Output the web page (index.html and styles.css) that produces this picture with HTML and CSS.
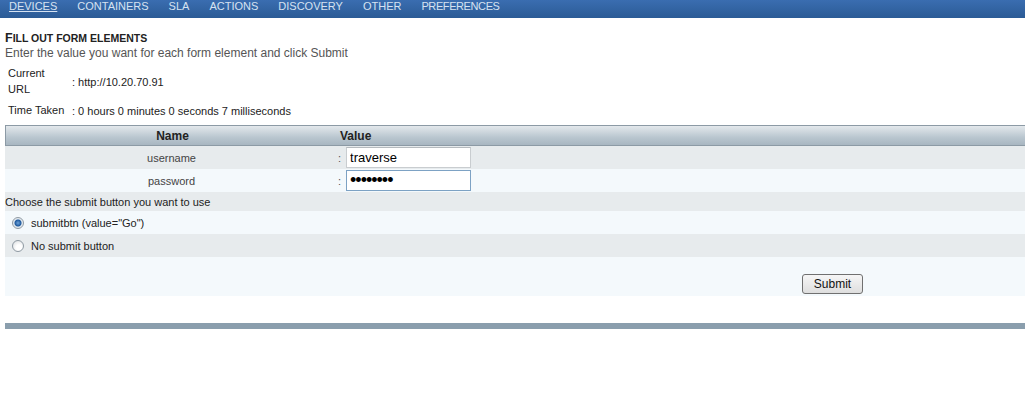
FILE: index.html
```html
<!DOCTYPE html>
<html lang="en">
<head>
    <meta charset="UTF-8">
    <title>Fill out form elements</title>
    <link rel="stylesheet" href="styles.css">
</head>
<body>
    <nav class="topnav">
        <a href="#" class="active">DEVICES</a>
        <a href="#">CONTAINERS</a>
        <a href="#">SLA</a>
        <a href="#">ACTIONS</a>
        <a href="#">DISCOVERY</a>
        <a href="#">OTHER</a>
        <a href="#">PREFERENCES</a>
    </nav>

    <section class="page">
        <h1>Fill out form elements</h1>
        <p class="subtitle">Enter the value you want for each form element and click Submit</p>

        <div class="info">
            <div class="info-label">Current URL</div>
            <div class="info-value">: http://10.20.70.91</div>
            <div class="info-label">Time Taken</div>
            <div class="info-value">: 0 hours 0 minutes 0 seconds 7 milliseconds</div>
        </div>

        <form class="form-table">
            <div class="head row">
                <div class="col-name">Name</div>
                <div class="col-value">Value</div>
            </div>
            <div class="row odd">
                <div class="col-name">username</div>
                <div class="col-value">: <input type="text" value="traverse"></div>
            </div>
            <div class="row even">
                <div class="col-name">password</div>
                <div class="col-value">: <input type="password" value="traverse" class="focused" autofocus></div>
            </div>
            <div class="row odd choose">Choose the submit button you want to use</div>
            <label class="row even radio-row">
                <input type="radio" name="submitbtn" checked> submitbtn (value="Go")
            </label>
            <label class="row odd radio-row">
                <input type="radio" name="submitbtn"> No submit button
            </label>
            <div class="row even submit-row">
                <button type="submit">Submit</button>
            </div>
        </form>

        <div class="footer-bar"></div>
    </section>
</body>
</html>
```

FILE: styles.css
```css
/* General Styles */
body {
    margin: 0;
    font-family: "Liberation Sans", Arial, sans-serif;
    font-size: 11px;
    color: #333;
    background: #fff;
}

.topnav {
    display: flex;
    gap: 20px;
    align-items: flex-start;
    height: 18px;
    padding-left: 9px;
    background: linear-gradient(#3a6db0, #2b5b95);
}

.topnav a {
    color: #d6e2f1;
    text-decoration: none;
    font-size: 11px;
    line-height: 13px;
}

.topnav a:last-child {
    letter-spacing: -0.4px;
}

.topnav a.active {
    text-decoration: underline;
}

.page {
    padding-left: 5px;
}

/* small caps drawn by hand: big first letter, rest in smaller capitals */
h1 {
    margin: 12px 0 0;
    font-size: 10.5px;
    line-height: 16px;
    text-transform: uppercase;
    font-weight: bold;
    color: #222;
}

h1::first-letter {
    font-size: 12.5px;
}

.subtitle {
    margin: 0;
    font-size: 12px;
    line-height: 15px;
    color: #555;
}

/* Info block */
.info {
    display: grid;
    grid-template-columns: 60px auto;
    column-gap: 4px;
    padding-left: 3px;
    margin-top: 2px;
    color: #222;
    line-height: 16px;
}

.info-label,
.info-value {
    padding: 2px 0;
    display: flex;
    align-items: center;
}

.info-label {
    display: block;
    align-self: center;
}

.info-value {
    padding-top: 4px;
}

/* Form table */
.form-table {
    margin-top: 4px;
}

.row {
    display: flex;
    align-items: center;
}

.head {
    height: 19px;
    border: 1px solid #8c9aa5;
    border-right: none;
    background: linear-gradient(#e3e8ec, #b9c6cf 60%, #a8b6c1);
    font-size: 12px;
    font-weight: bold;
    color: #222;
}

.odd {
    background: #e7ebed;
}

.even {
    background: #f4f9fc;
}

.col-name {
    width: 333px;
    text-align: center;
    font-size: 11px;
    color: #444;
}

.head .col-name {
    font-size: 12px;
    color: #222;
}

.col-value {
    display: flex;
    align-items: center;
    gap: 5px;
    color: #555;
}

.head .col-value {
    color: #222;
    padding-left: 1px;
}

.row.odd,
.row.even {
    height: 23px;
}

input[type="text"],
input[type="password"] {
    width: 125px;
    height: 21px;
    box-sizing: border-box;
    border: 1px solid #c9cdd0;
    border-top-color: #b5babe;
    padding: 0 3px;
    font-family: "Liberation Sans", Arial, sans-serif;
    font-size: 13px;
    color: #000;
    background: #fff;
    outline: none;
}

input[type="password"] {
    font-size: 18px;
    letter-spacing: -1px;
}

input.focused {
    border-color: #7da2c4;
}

.row.choose {
    height: 19px;
    color: #222;
}

.radio-row {
    gap: 7px;
    padding-left: 7px;
    color: #222;
    cursor: pointer;
}

input[type="radio"] {
    appearance: none;
    -webkit-appearance: none;
    width: 12px;
    height: 12px;
    margin: 0;
    border: 1px solid #8f9aa3;
    border-radius: 50%;
    box-sizing: border-box;
    background: radial-gradient(circle at 60% 65%, #fff 30%, #d5d9dc 100%);
}

input[type="radio"]:checked {
    background: radial-gradient(circle at 50% 50%, #6fa3d8 0, #1f5a9e 3px, #dde5ec 4px, #fff 100%);
}

.row.submit-row {
    height: 39px;
    align-items: flex-start;
    padding-left: 797px;
    box-sizing: border-box;
}

button {
    margin-top: 17px;
    width: 61px;
    height: 20px;
    padding: 0;
    border: 1px solid #707070;
    border-radius: 3px;
    background: linear-gradient(#f6f6f6, #dedede);
    font-family: "Liberation Sans", Arial, sans-serif;
    font-size: 12px;
    color: #111;
    cursor: pointer;
}

.footer-bar {
    margin-top: 27px;
    height: 6px;
    background: #8a9ead;
}
```
